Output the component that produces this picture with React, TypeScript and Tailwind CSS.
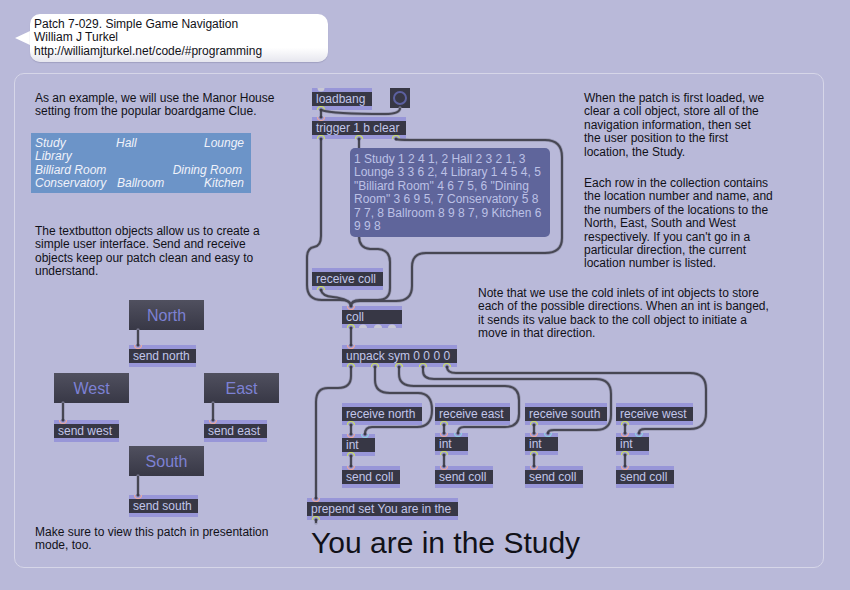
import React from 'react';

type NodeProps = {
  className: string;
  children: React.ReactNode;
};

// a Max object box: purple inlet/outlet bands round a dark label
function MaxObject({ className, children }: NodeProps) {
  return (
    <div className={`absolute flex h-[22px] flex-col justify-between bg-[#9896d8] ${className}`}>
      <div className="mt-[4px] mb-[4px] flex h-[14px] items-center bg-[#373745] pl-[4px] text-[12px] leading-[14px] whitespace-nowrap text-[#c2c6ea]">
        {children}
      </div>
    </div>
  );
}

function TextButton({ className, children }: NodeProps) {
  return (
    <div
      className={`absolute flex h-[30px] w-[75px] items-center justify-center bg-gradient-to-b from-[#50505f] to-[#383846] pt-[1px] text-[16px] text-[#7d81d4] ${className}`}
    >
      {children}
    </div>
  );
}

function Comment({ className, children }: NodeProps) {
  return (
    <p className={`absolute text-[12px] leading-[13.4px] whitespace-nowrap text-[#111118] ${className}`}>{children}</p>
  );
}

const wires = [
  'M321 110 L321 117',
  'M321 110 C330 113 345 114 385 114 Q400 114 400 108',
  'M321 139 L321 236 Q321 246 314 247 Q307 248 307 258 L307 285 Q307 300 322 300 L340 300 Q351 300 351 306',
  'M359 139 L359 236 Q359 248 370 249 L378 249 Q390 250 390 262 L390 288 Q390 300 378 300 L360 300 Q351 300 351 306',
  'M396 139 Q398 140 410 140 L545 140 Q562 140 562 157 L562 238 Q562 253 545 253 L426 253 Q412 253 412 267 L412 286 Q412 301 396 301 L360 301 Q351 301 351 306',
  'M321 290 Q322 296 333 297 Q350 299 351 306',
  'M351 328 L351 345',
  'M351 367 L351 376 Q351 388 338 388 L328 388 Q316 388 316 402 L316 498',
  'M375 367 L375 380 Q375 393 390 393 L418 393 Q432 393 432 410 Q432 427 417 427 L372 427 Q365 427 365 434',
  'M399 367 L399 374 Q399 386 414 386 L505 386 Q519 386 519 400 L519 414 Q519 427 505 427 L464 427 Q458 427 458 433',
  'M423 367 L423 371 Q423 379 434 379 L596 379 Q611 379 611 394 L611 415 Q611 430 596 430 L554 430 Q548 430 548 433',
  'M447 367 Q447 373 456 373 L690 373 Q706 373 706 389 L706 413 Q706 429 690 429 L645 429 Q639 429 639 433',
  'M351 425 L351 434',
  'M351 456 L351 466',
  'M444 425 L444 433',
  'M444 455 L444 466',
  'M534 425 L534 433',
  'M534 455 L534 466',
  'M625 425 L625 433',
  'M625 455 L625 466',
  'M138 330 L138 345',
  'M63 403 L63 420',
  'M213 403 L213 420',
  'M138 476 L138 495',
  'M316 520 L316 523',
];

const inlets: [number, number][] = [
  [321, 117],
  [351, 306],
  [351, 345],
  [351, 434],
  [351, 466],
  [444, 433],
  [444, 466],
  [534, 433],
  [534, 466],
  [625, 433],
  [625, 466],
  [316, 498],
  [138, 345],
  [63, 420],
  [213, 420],
  [138, 495],
];

const coldInlets: [number, number][] = [
  [365, 434],
  [458, 433],
  [548, 433],
  [639, 433],
];

const outlets: [number, number][] = [
  [321, 110],
  [321, 139],
  [359, 139],
  [396, 139],
  [321, 290],
  [351, 328],
  [351, 367],
  [375, 367],
  [399, 367],
  [423, 367],
  [447, 367],
  [351, 425],
  [444, 425],
  [534, 425],
  [625, 425],
  [351, 456],
  [444, 455],
  [534, 455],
  [625, 455],
  [316, 520],
];

function Patchcords() {
  return (
    <svg className="absolute top-0 left-0" width={850} height={590} fill="none">
      {inlets.map(([x, y]) => (
        <path key={`in-${x}-${y}`} d={`M${x - 3.5} ${y} A3.5 3.5 0 0 0 ${x + 3.5} ${y}`} stroke="#eba99c" strokeWidth={1.2} />
      ))}
      {coldInlets.map(([x, y]) => (
        <path key={`cold-${x}-${y}`} d={`M${x - 3.5} ${y} A3.5 3.5 0 0 0 ${x + 3.5} ${y}`} stroke="#8ccfe0" strokeWidth={1.2} />
      ))}
      {outlets.map(([x, y]) => (
        <path key={`out-${x}-${y}`} d={`M${x - 3.5} ${y} A3.5 3.5 0 0 1 ${x + 3.5} ${y}`} stroke="#cbdf62" strokeWidth={1.2} />
      ))}
      {wires.map((d) => (
        <path key={`halo-${d}`} d={d} stroke="#8c8ca4" strokeWidth={3.4} strokeLinecap="round" opacity={0.7} />
      ))}
      {wires.map((d) => (
        <path key={d} d={d} stroke="#474753" strokeWidth={2} />
      ))}
      {[...inlets, ...coldInlets, ...outlets].map(([x, y]) => (
        <circle key={`dot-${x}-${y}`} cx={x} cy={y} r={1.5} fill="#3c3c48" />
      ))}
      <path d="M317.5 88 A3.5 3.5 0 0 0 324.5 88 Z" fill="#c8c8d4" />
      <path d="M359 328 A4 3.5 0 0 1 367 328 Z" fill="#c8c8d4" />
      <path d="M374 328 A4 3.5 0 0 1 382 328 Z" fill="#c8c8d4" />
      <path d="M388 328 A4 3.5 0 0 1 396 328 Z" fill="#c8c8d4" />
    </svg>
  );
}

export default function App() {
  return (
    <div className="relative h-[590px] w-[850px] overflow-hidden bg-[#b9b9d9] font-['Liberation_Sans',Arial,sans-serif]">
      {/* title bubble */}
      <div className="absolute top-[31px] left-[15px] h-0 w-0 border-y-[7px] border-r-[15px] border-y-transparent border-r-white" />
      <div className="absolute top-[14px] left-[30px] h-[48px] w-[298px] rounded-[10px] bg-gradient-to-b from-white from-70% to-[#e6e6ee] pt-[4px] pl-[4px] text-[12px] leading-[13.4px] whitespace-nowrap text-[#111118] shadow-[0_1px_1px_#a0a0c0]">
        Patch 7-029. Simple Game Navigation
        <br />
        William J Turkel
        <br />
        http://williamjturkel.net/code/#programming
      </div>

      {/* presentation panel */}
      <div className="absolute top-[73px] left-[14px] h-[495px] w-[810px] rounded-[10px] border border-[#d6d6e8]" />

      <Comment className="top-[92px] left-[35px]">
        As an example, we will use the Manor House
        <br />
        setting from the popular boardgame Clue.
      </Comment>

      <div className="absolute top-[133px] left-[31px] grid h-[60px] w-[220px] grid-cols-[81px_1fr_auto] content-center bg-[#6c94c8] pt-[1px] pr-[7px] pl-[4px] text-[12px] leading-[13.4px] whitespace-nowrap text-[#f0f2fa] italic">
        <span>Study</span>
        <span>Hall</span>
        <span className="text-right">Lounge</span>
        <span className="col-span-3">Library</span>
        <span className="col-span-2">Billiard Room</span>
        <span className="pr-[2px] text-right">Dining Room</span>
        <span>Conservatory</span>
        <span className="pl-[1px]">Ballroom</span>
        <span className="text-right">Kitchen</span>
      </div>

      <Comment className="top-[225px] left-[35px]">
        The textbutton objects allow us to create a
        <br />
        simple user interface. Send and receive
        <br />
        objects keep our patch clean and easy to
        <br />
        understand.
      </Comment>

      <Comment className="top-[526px] left-[35px]">
        Make sure to view this patch in presentation
        <br />
        mode, too.
      </Comment>

      <Comment className="top-[92px] left-[584px]">
        When the patch is first loaded, we
        <br />
        clear a coll object, store all of the
        <br />
        navigation information, then set
        <br />
        the user position to the first
        <br />
        location, the Study.
      </Comment>

      <Comment className="top-[177px] left-[584px]">
        Each row in the collection contains
        <br />
        the location number and name, and
        <br />
        the numbers of the locations to the
        <br />
        North, East, South and West
        <br />
        respectively. If you can't go in a
        <br />
        particular direction, the current
        <br />
        location number is listed.
      </Comment>

      <Comment className="top-[287px] left-[478px]">
        Note that we use the cold inlets of int objects to store
        <br />
        each of the possible directions. When an int is banged,
        <br />
        it sends its value back to the coll object to initiate a
        <br />
        move in that direction.
      </Comment>

      {/* navigation buttons */}
      <TextButton className="top-[300px] left-[129px]">North</TextButton>
      <TextButton className="top-[373px] left-[54px]">West</TextButton>
      <TextButton className="top-[373px] left-[204px]">East</TextButton>
      <TextButton className="top-[446px] left-[129px]">South</TextButton>
      <MaxObject className="top-[345px] left-[129px] w-[67px]">send north</MaxObject>
      <MaxObject className="top-[420px] left-[54px] w-[65px]">send west</MaxObject>
      <MaxObject className="top-[420px] left-[204px] w-[63px]">send east</MaxObject>
      <MaxObject className="top-[495px] left-[129px] w-[69px]">send south</MaxObject>

      {/* main patch */}
      <MaxObject className="top-[88px] left-[312px] w-[60px]">loadbang</MaxObject>
      <div className="absolute top-[88px] left-[390px] flex h-[20px] w-[20px] items-center justify-center bg-[#373745]">
        <div className="h-[14px] w-[14px] rounded-full border-2 border-[#5c60a0]" />
      </div>
      <MaxObject className="top-[117px] left-[312px] w-[94px]">trigger 1 b clear</MaxObject>
      <MaxObject className="top-[268px] left-[312px] w-[71px]">receive coll</MaxObject>
      <MaxObject className="top-[306px] left-[342px] w-[60px]">coll</MaxObject>
      <MaxObject className="top-[345px] left-[342px] w-[115px]">unpack sym 0 0 0 0</MaxObject>

      <MaxObject className="top-[403px] left-[342px] w-[80px]">receive north</MaxObject>
      <MaxObject className="top-[434px] left-[342px] w-[33px]">int</MaxObject>
      <MaxObject className="top-[466px] left-[342px] w-[58px]">send coll</MaxObject>

      <MaxObject className="top-[403px] left-[435px] w-[75px]">receive east</MaxObject>
      <MaxObject className="top-[433px] left-[435px] w-[33px]">int</MaxObject>
      <MaxObject className="top-[466px] left-[435px] w-[58px]">send coll</MaxObject>

      <MaxObject className="top-[403px] left-[525px] w-[82px]">receive south</MaxObject>
      <MaxObject className="top-[433px] left-[525px] w-[33px]">int</MaxObject>
      <MaxObject className="top-[466px] left-[525px] w-[58px]">send coll</MaxObject>

      <MaxObject className="top-[403px] left-[616px] w-[77px]">receive west</MaxObject>
      <MaxObject className="top-[433px] left-[616px] w-[33px]">int</MaxObject>
      <MaxObject className="top-[466px] left-[616px] w-[58px]">send coll</MaxObject>

      <MaxObject className="top-[498px] left-[307px] w-[151px]">prepend set You are in the</MaxObject>

      <Patchcords />

      {/* the message box sits over the cord that feeds it */}
      <div className="absolute top-[148px] left-[350px] h-[89px] w-[200px] rounded-[5px] bg-[#5f659b] pt-[5px] pl-[4px] text-[12px] leading-[13.4px] whitespace-nowrap text-[#bcc1e6]">
        1 Study 1 2 4 1, 2 Hall 2 3 2 1, 3
        <br />
        Lounge 3 3 6 2, 4 Library 1 4 5 4, 5
        <br />
        "Billiard Room" 4 6 7 5, 6 "Dining
        <br />
        Room" 3 6 9 5, 7 Conservatory 5 8
        <br />
        7 7, 8 Ballroom 8 9 8 7, 9 Kitchen 6
        <br />9 9 8
      </div>

      <div className="absolute top-[524px] left-[311px] text-[30px] leading-[37px] whitespace-nowrap text-[#111118]">
        You are in the Study
      </div>
    </div>
  );
}
